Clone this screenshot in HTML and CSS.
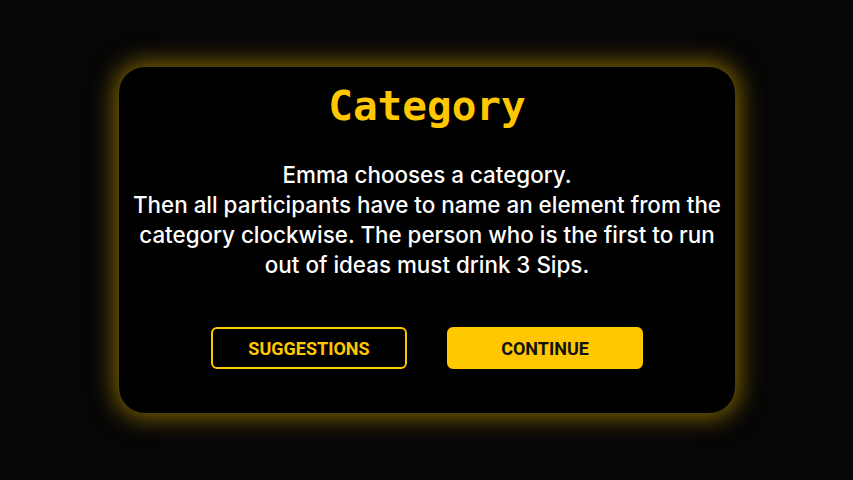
FILE: index.html
```html
<!DOCTYPE html>
<html lang="en">
<head>
<meta charset="utf-8">
<title>Category</title>
<link rel="stylesheet" href="styles.css">
</head>
<body>
<main class="stage">
  <section class="card">
    <h1 class="title">Category</h1>
    <p class="text">Emma chooses a category.<br>Then all participants have to name an element from the category clockwise. The person who is the first to run out of ideas must drink 3 Sips.</p>
    <div class="actions">
      <button class="btn btn-outline">SUGGESTIONS</button>
      <button class="btn btn-solid">CONTINUE</button>
    </div>
  </section>
</main>
</body>
</html>
```

FILE: styles.css
```css
html, body {
  margin: 0;
  padding: 0;
  background: #060606;
  width: 853px;
  height: 480px;
  overflow: hidden;
}
.stage {
  width: 853px;
  height: 480px;
  display: flex;
  align-items: center;
  justify-content: center;
}
.card {
  box-sizing: border-box;
  width: 616px;
  height: 346px;
  margin-left: 1px;
  background: #000;
  border-radius: 26px;
  box-shadow: 0 0 24px 4px rgba(255, 199, 0, 0.5);
  display: flex;
  flex-direction: column;
  align-items: center;
  padding: 15px 10px 0;
}
.title {
  margin: 0;
  font-family: "DejaVu Sans Mono", monospace;
  font-weight: bold;
  font-size: 41px;
  line-height: 48px;
  color: #ffc700;
}
.text {
  margin: 30px 0 0;
  font-family: Inter, sans-serif;
  font-weight: 500;
  font-size: 22.4px;
  line-height: 30px;
  color: #fff;
  text-align: center;
}
.actions {
  margin-top: 47px;
  display: flex;
  gap: 40px;
}
.btn {
  box-sizing: border-box;
  width: 196px;
  height: 42px;
  border-radius: 6px;
  font-family: Roboto, sans-serif;
  font-weight: bold;
  font-size: 18px;
  letter-spacing: 0;
  cursor: pointer;
}
.btn-outline {
  background: transparent;
  border: 2px solid #ffc700;
  color: #ffc700;
}
.btn-solid {
  background: #ffc700;
  border: 2px solid #ffc700;
  color: #111;
}
```
